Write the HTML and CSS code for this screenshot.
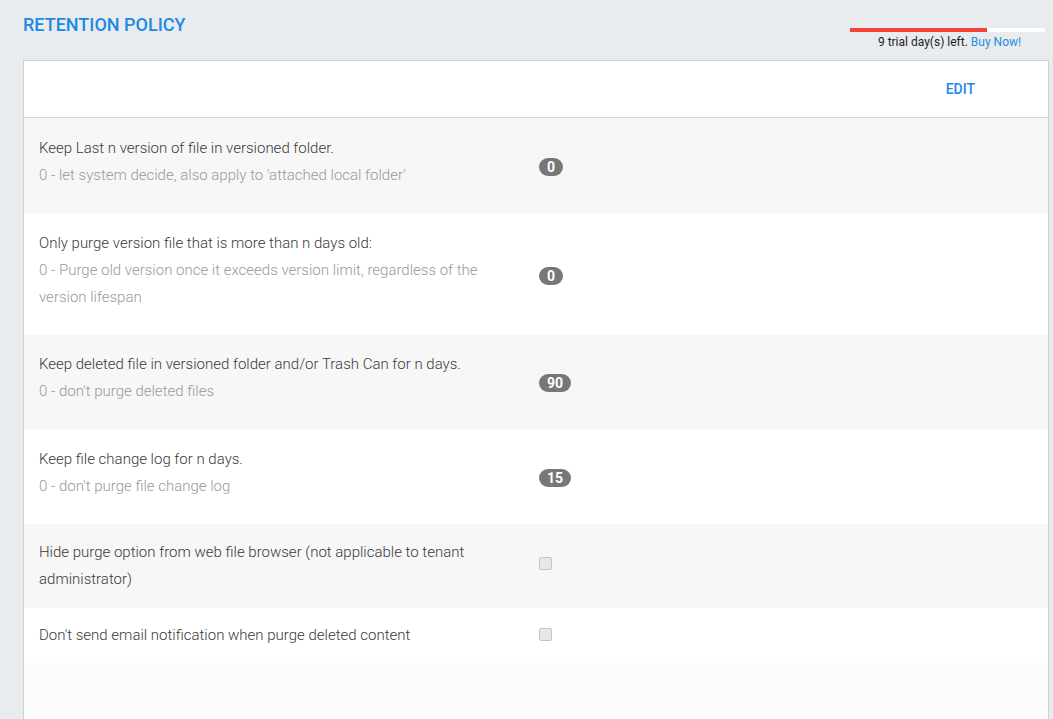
FILE: index.html
```html
<!DOCTYPE html>
<html lang="en">
<head>
    <meta charset="UTF-8">
    <meta name="viewport" content="width=device-width, initial-scale=1.0">
    <title>Retention Policy</title>
    <link rel="stylesheet" href="styles.css">
</head>
<body>
    <div class="page">
        <div class="top">
            <h1 class="title">RETENTION POLICY</h1>
            <div class="trial">
                <div class="trial-bar"><div class="trial-used" style="width: 70%"></div></div>
                <div class="trial-text">9 trial day(s) left. <a href="javascript:;">Buy Now!</a></div>
            </div>
        </div>

        <div class="panel">
            <div class="panel-head">
                <a href="javascript:;" class="edit">EDIT</a>
            </div>

            <div class="item">
                <div class="label">
                    <p>Keep Last n version of file in versioned folder.</p>
                    <p class="hint">0 - let system decide, also apply to 'attached local folder'</p>
                </div>
                <div class="value"><span class="badge">0</span></div>
            </div>
            <div class="item">
                <div class="label">
                    <p>Only purge version file that is more than n days old:</p>
                    <p class="hint">0 - Purge old version once it exceeds version limit, regardless of the version lifespan</p>
                </div>
                <div class="value"><span class="badge">0</span></div>
            </div>
            <div class="item">
                <div class="label">
                    <p>Keep deleted file in versioned folder and/or Trash Can for n days.</p>
                    <p class="hint">0 - don't purge deleted files</p>
                </div>
                <div class="value"><span class="badge">90</span></div>
            </div>
            <div class="item">
                <div class="label">
                    <p>Keep file change log for n days.</p>
                    <p class="hint">0 - don't purge file change log</p>
                </div>
                <div class="value"><span class="badge">15</span></div>
            </div>
            <div class="item item-check">
                <div class="label">
                    <p>Hide purge option from web file browser (not applicable to tenant administrator)</p>
                </div>
                <div class="value"><input type="checkbox" disabled></div>
            </div>
            <div class="item item-check">
                <div class="label">
                    <p>Don't send email notification when purge deleted content</p>
                </div>
                <div class="value"><input type="checkbox" disabled></div>
            </div>
        </div>
    </div>
</body>
</html>
```

FILE: styles.css
```css
*{
    margin: 0;
    padding: 0;
    box-sizing: border-box;
}
html, body{
    height: 100%;
}
body{
    background-color: #e9ecef;
    font-family: Roboto, "Liberation Sans", sans-serif;
    color: #333;
    overflow: hidden;
}
a{
    text-decoration: none;
}
.page{
    padding: 0 4px 0 23px;
    height: 100%;
    display: flex;
    flex-direction: column;
}
.top{
    display: flex;
    justify-content: space-between;
    height: 60px;
}
.title{
    font-size: 18px;
    font-weight: 500;
    color: #1e88e5;
    margin-top: 15px;
    line-height: 20px;
}
.trial{
    width: 195px;
    margin-top: 28px;
    margin-right: 4px;
    display: flex;
    flex-direction: column;
    align-items: center;
}
.trial-bar{
    width: 195px;
    height: 4px;
    background-color: #fff;
}
.trial-used{
    height: 100%;
    background-color: #f44336;
}
.trial-text{
    font-size: 12px;
    line-height: 14px;
    margin-top: 3px;
    margin-left: 4px;
    color: #222;
}
.trial-text a{
    color: #2a8be0;
}
.panel{
    flex: 1;
    background-color: #fcfcfc;
    border: 1px solid #d0d0d0;
    border-bottom: none;
}
.panel-head{
    height: 57px;
    background-color: #fff;
    border-bottom: 1px solid #d6d6d6;
    display: flex;
    align-items: center;
    justify-content: flex-end;
    padding-right: 73px;
}
.edit{
    font-size: 14px;
    font-weight: 500;
    color: #1e88e5;
}
.item{
    display: grid;
    grid-template-columns: 482px 1fr;
    column-gap: 18px;
    align-items: center;
    padding: 16px 15px 24px;
    background-color: #fff;
    font-size: 15px;
    font-weight: 300;
    line-height: 27px;
    color: #3a3a3a;
}
.item:nth-of-type(even){
    background-color: #f7f7f7;
}
.item:nth-of-type(2){
    padding: 17px 15px 25px;
}
.item:nth-of-type(4){
    padding-bottom: 25px;
}
.item-check{
    padding: 15px;
}
.item-check:last-child{
    padding: 14px 15px;
}
.hint{
    color: #999;
}
.value{
    display: flex;
    align-items: center;
}
.badge{
    display: inline-block;
    min-width: 10px;
    margin-top: 10px;
    padding: 2px 8px;
    font-size: 14px;
    font-weight: 700;
    line-height: 14px;
    color: #fff;
    background-color: #777;
    border-radius: 10px;
    text-align: center;
}
input[type="checkbox"]{
    appearance: none;
    -webkit-appearance: none;
    width: 13px;
    height: 13px;
    margin-bottom: 6px;
    border: 1px solid #c4c4c4;
    border-radius: 2px;
    background-color: #e8e8e8;
}
.item-check:last-child input[type="checkbox"]{
    margin-bottom: 2px;
}
```
